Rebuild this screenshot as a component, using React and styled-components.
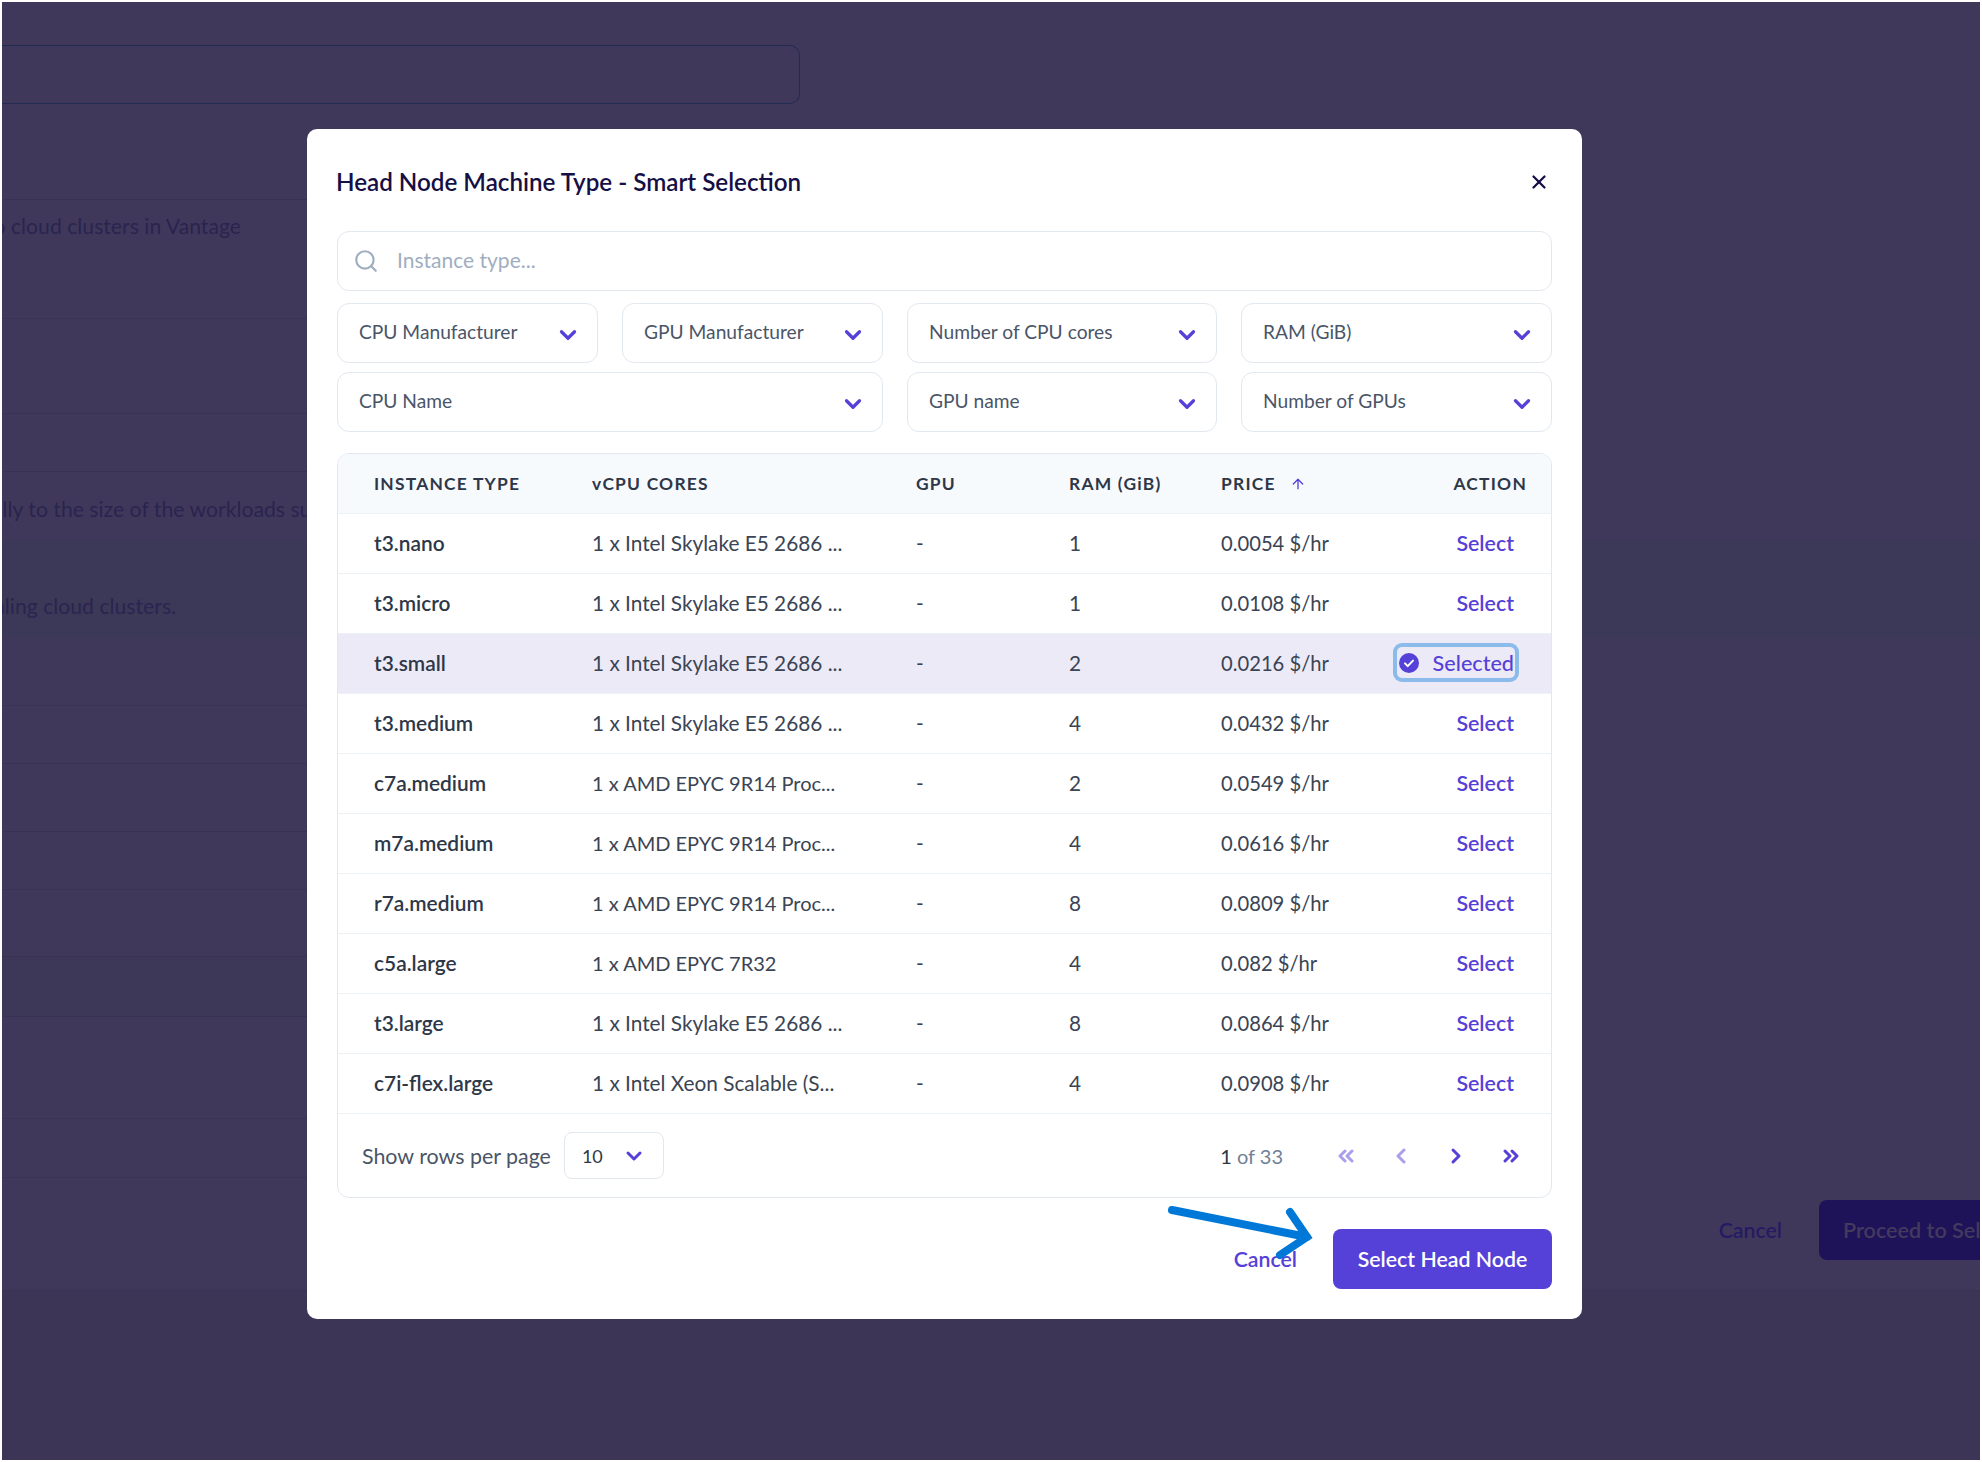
import React from "react";
import styled, { createGlobalStyle } from "styled-components";
import {
  ArrowUp,
  ChevronDown,
  ChevronLeft,
  ChevronRight,
  ChevronsLeft,
  ChevronsRight,
  Search,
  X,
} from "lucide-react";

const FONT = `Lato, "Open Sans", "Liberation Sans", sans-serif`;
const PURPLE = "#5541d7";
const LINE = "#393254";

const GlobalStyle = createGlobalStyle`
  html, body {
    margin: 0;
    padding: 0;
    background: #fff;
  }
  * {
    box-sizing: border-box;
  }
`;

const Page = styled.div`
  position: relative;
  width: 1982px;
  height: 1462px;
  padding: 2px;
  overflow: hidden;
  background: #fff;
  font-family: ${FONT};
`;

const Backdrop = styled.div`
  position: relative;
  height: 100%;
  overflow: hidden;
  background: #40385a;
  color: #2a2450;
`;

const TopField = styled.div`
  width: 798px;
  height: 59px;
  margin-top: 43px;
  margin-bottom: 95px;
  border: 1px solid #232b52;
  border-left: none;
  border-radius: 0 10px 10px 0;
`;

const Row = styled.div`
  height: ${(p) => p.$height}px;
  padding-top: ${(p) => p.$pad || 0}px;
  font-size: 21.2px;
  line-height: 22px;
  white-space: nowrap;
  text-indent: ${(p) => p.$indent || 0}px;
  background:
    ${(p) => (p.$noLine ? "" : `linear-gradient(${LINE}, ${LINE}) left top / 1000px 1px no-repeat,`)}
    ${(p) => (p.$leftBand ? "linear-gradient(#3d3857, #3d3857) left top / 1000px 100% no-repeat," : "")}
    ${(p) => (p.$band ? "#3c3857" : "transparent")};
`;

const BackdropFooter = styled.div`
  display: flex;
  align-items: center;
  justify-content: flex-end;
  gap: 37px;
  height: 113px;
  padding-bottom: 7px;
  background: linear-gradient(${LINE}, ${LINE}) left top / 1000px 1px no-repeat;
`;

const BackdropCancel = styled.span`
  color: #251b63;
  font-size: 21.3px;
  font-weight: 600;
`;

const BackdropButton = styled.div`
  flex: none;
  width: 300px;
  height: 60px;
  margin-right: -139px;
  padding-left: 24px;
  border-radius: 8px;
  background: #1e1259;
  color: #433a5e;
  font-size: 21.6px;
  font-weight: 600;
  line-height: 60px;
  white-space: nowrap;
`;

const BackdropEnd = styled.div`
  height: 200px;
  border-top: 1px solid ${LINE};
  background: #3c3555;
`;

const Modal = styled.div`
  position: absolute;
  left: 305px;
  top: 127px;
  width: 1275px;
  height: 1190px;
  padding: 0 30px 30px;
  border-radius: 10px;
  background: #fff;
  color: #2d3748;
  font-family: ${FONT};
`;

const ModalHeader = styled.div`
  display: flex;
  align-items: center;
  justify-content: space-between;
  height: 102px;
  padding-top: 2px;
`;

const Title = styled.h2`
  margin: 0 0 0 -1px;
  color: #160f45;
  font-size: 24.2px;
  font-weight: 600;
`;

const CloseButton = styled.button`
  display: flex;
  margin-right: 2px;
  padding: 2px 0 0;
  border: none;
  background: none;
  color: #160f45;
`;

const SearchBox = styled.div`
  display: flex;
  align-items: center;
  gap: 18px;
  height: 60px;
  padding: 0 15px;
  border: 1px solid #e2e8f0;
  border-radius: 12px;
  color: #a0aec0;
  font-size: 21px;
  line-height: 22px;
  span {
    margin-top: -2px;
  }
`;

const Filters = styled.div`
  display: grid;
  grid-template-columns: 261px 261px 310px 1fr;
  grid-auto-rows: 60px;
  column-gap: 24px;
  row-gap: 9px;
  margin-top: 12px;
`;

const Filter = styled.div`
  display: flex;
  align-items: center;
  justify-content: space-between;
  padding: 0 16px 0 21px;
  border: 1px solid #e2e8f0;
  border-radius: 12px;
  color: #4a5568;
  font-size: 19.2px;
  grid-column: ${(p) => (p.$wide ? "span 2" : "auto")};
  span {
    margin-top: -4px;
  }
  svg {
    color: ${PURPLE};
    margin-top: 3px;
  }
`;

const TableWrap = styled.div`
  height: 745px;
  margin-top: 21px;
  overflow: hidden;
  border: 1px solid #e2e8f0;
  border-radius: 12px;
`;

const TableRow = styled.div`
  display: grid;
  grid-template-columns: 218px 324px 153px 152px 172px 1fr;
  align-items: center;
  height: 60px;
  padding: ${(p) => (p.$head ? "0 24px 0 36px" : "0 25px 2px 36px")};
  border-bottom: 1px solid #edf2f7;
  background: ${(p) => (p.$head ? "#f7fafc" : p.$selected ? "#edeaf8" : "#fff")};
`;

const HeadCell = styled.div`
  display: flex;
  align-items: center;
  gap: 14px;
  justify-content: ${(p) => (p.$end ? "flex-end" : "flex-start")};
  color: #2d3748;
  font-size: 17.4px;
  font-weight: 700;
  letter-spacing: 0.07em;
  svg {
    color: ${PURPLE};
  }
`;

const NameCell = styled.div`
  font-size: 20.9px;
  font-weight: 600;
`;

const Cell = styled.div`
  color: #3a4454;
  font-size: ${(p) => p.$size || 20.8}px;
`;

const ActionCell = styled.div`
  display: flex;
  justify-content: flex-end;
  padding-right: 12px;
  color: ${PURPLE};
  font-size: 21.4px;
  font-weight: 600;
`;

const SelectedButton = styled.div`
  display: flex;
  flex: none;
  align-items: center;
  gap: 14px;
  height: 31px;
  margin-right: -1px;
  padding: 0 1px 0 2px;
  border-radius: 5px;
  box-shadow: 0 0 0 4px #8abbeb;
  font-size: 21.6px;
  font-weight: 500;
  white-space: nowrap;
`;

const TableFooter = styled.div`
  display: flex;
  align-items: center;
  justify-content: space-between;
  height: 83px;
  padding: 0 13px 0 24px;
`;

const RowsPerPage = styled.div`
  display: flex;
  align-items: center;
  gap: 13px;
  color: #4a5568;
  font-size: 21.4px;
`;

const PageSize = styled.div`
  display: flex;
  align-items: center;
  justify-content: space-between;
  width: 100px;
  height: 47px;
  padding: 0 17px 0 17px;
  border: 1px solid #e2e8f0;
  border-radius: 8px;
  color: #2d3748;
  font-size: 18px;
  svg {
    color: ${PURPLE};
  }
`;

const Pager = styled.div`
  display: flex;
  align-items: center;
`;

const PageCount = styled.span`
  margin-right: 35px;
  color: #718096;
  font-size: 20px;
  b {
    color: #2d3748;
    font-weight: 400;
  }
`;

const PageButton = styled.span`
  display: flex;
  justify-content: center;
  width: 55px;
  color: ${PURPLE};
  opacity: ${(p) => (p.$disabled ? 0.5 : 1)};
`;

const Actions = styled.div`
  display: flex;
  align-items: center;
  justify-content: flex-end;
  gap: 36px;
  margin-top: 31px;
`;

const CancelLink = styled.span`
  color: ${PURPLE};
  font-size: 21.3px;
  font-weight: 600;
`;

const PrimaryButton = styled.button`
  width: 219px;
  height: 60px;
  border: none;
  border-radius: 8px;
  background: ${PURPLE};
  color: #fff;
  font-family: inherit;
  font-size: 21.3px;
  font-weight: 600;
`;

const ArrowMark = styled.svg`
  position: absolute;
  left: 1160px;
  top: 1198px;
  pointer-events: none;
`;

const backdropRows = [
  { height: 119, pad: 16, text: "to cloud clusters in Vantage", indent: -16 },
  { height: 95 },
  { height: 58 },
  { height: 69, pad: 27, text: "ally to the size of the workloads supplied to them", indent: -10 },
  { height: 98, pad: 55, band: true, noLine: true, text: "scaling cloud clusters.", indent: -27 },
  { height: 67, noLine: true },
  { height: 58 },
  { height: 68 },
  { height: 58 },
  { height: 67 },
  { height: 60, leftBand: true },
  { height: 102 },
  { height: 59 },
];

const instances = [
  ["t3.nano", "1 x Intel Skylake E5 2686 ...", "1", "0.0054 $/hr"],
  ["t3.micro", "1 x Intel Skylake E5 2686 ...", "1", "0.0108 $/hr"],
  ["t3.small", "1 x Intel Skylake E5 2686 ...", "2", "0.0216 $/hr", true],
  ["t3.medium", "1 x Intel Skylake E5 2686 ...", "4", "0.0432 $/hr"],
  ["c7a.medium", "1 x AMD EPYC 9R14 Proc...", "2", "0.0549 $/hr"],
  ["m7a.medium", "1 x AMD EPYC 9R14 Proc...", "4", "0.0616 $/hr"],
  ["r7a.medium", "1 x AMD EPYC 9R14 Proc...", "8", "0.0809 $/hr"],
  ["c5a.large", "1 x AMD EPYC 7R32", "4", "0.082 $/hr"],
  ["t3.large", "1 x Intel Skylake E5 2686 ...", "8", "0.0864 $/hr"],
  ["c7i-flex.large", "1 x Intel Xeon Scalable (S...", "4", "0.0908 $/hr"],
];

const filters = [
  { label: "CPU Manufacturer" },
  { label: "GPU Manufacturer" },
  { label: "Number of CPU cores" },
  { label: "RAM (GiB)" },
  { label: "CPU Name", wide: true },
  { label: "GPU name" },
  { label: "Number of GPUs" },
];

function CheckBadge() {
  return (
    <svg width="20" height="20" viewBox="0 0 20 20">
      <circle cx="10" cy="10" r="10" fill={PURPLE} />
      <path d="M6 10.4l2.7 2.7L14 7.6" fill="none" stroke="#fff" strokeWidth="2" strokeLinecap="round" strokeLinejoin="round" />
    </svg>
  );
}

export default function App() {
  return (
    <Page>
      <GlobalStyle />
      <Backdrop>
        <TopField />
        {backdropRows.map((row, i) => (
          <Row key={i} $height={row.height} $pad={row.pad} $indent={row.indent} $band={row.band} $noLine={row.noLine} $leftBand={row.leftBand}>
            {row.text}
          </Row>
        ))}
        <BackdropFooter>
          <BackdropCancel>Cancel</BackdropCancel>
          <BackdropButton>Proceed to Select Instance</BackdropButton>
        </BackdropFooter>
        <BackdropEnd />
        <Modal>
          <ModalHeader>
            <Title>Head Node Machine Type - Smart Selection</Title>
            <CloseButton>
              <X size={22} strokeWidth={2.5} />
            </CloseButton>
          </ModalHeader>
          <SearchBox>
            <Search size={26} strokeWidth={2} />
            <span>Instance type...</span>
          </SearchBox>
          <Filters>
            {filters.map((f) => (
              <Filter key={f.label} $wide={f.wide}>
                <span>{f.label}</span>
                <ChevronDown size={26} strokeWidth={3} />
              </Filter>
            ))}
          </Filters>
          <TableWrap>
            <TableRow $head>
              <HeadCell>INSTANCE TYPE</HeadCell>
              <HeadCell>vCPU CORES</HeadCell>
              <HeadCell>GPU</HeadCell>
              <HeadCell>RAM (GiB)</HeadCell>
              <HeadCell>
                PRICE
                <ArrowUp size={16} strokeWidth={2} />
              </HeadCell>
              <HeadCell $end>ACTION</HeadCell>
            </TableRow>
            {instances.map(([name, cpu, ram, price, selected]) => (
              <TableRow key={name} $selected={selected}>
                <NameCell>{name}</NameCell>
                <Cell $size={cpu.includes("AMD") ? 20 : 20.8}>{cpu}</Cell>
                <Cell>-</Cell>
                <Cell>{ram}</Cell>
                <Cell $size={20.2}>{price}</Cell>
                <ActionCell>
                  {selected ? (
                    <SelectedButton>
                      <CheckBadge />
                      Selected
                    </SelectedButton>
                  ) : (
                    "Select"
                  )}
                </ActionCell>
              </TableRow>
            ))}
            <TableFooter>
              <RowsPerPage>
                Show rows per page
                <PageSize>
                  10
                  <ChevronDown size={24} strokeWidth={3} />
                </PageSize>
              </RowsPerPage>
              <Pager>
                <PageCount>
                  <b>1</b> of 33
                </PageCount>
                <PageButton $disabled>
                  <ChevronsLeft size={24} strokeWidth={3} />
                </PageButton>
                <PageButton $disabled>
                  <ChevronLeft size={24} strokeWidth={3} />
                </PageButton>
                <PageButton>
                  <ChevronRight size={24} strokeWidth={3} />
                </PageButton>
                <PageButton>
                  <ChevronsRight size={24} strokeWidth={3} />
                </PageButton>
              </Pager>
            </TableFooter>
          </TableWrap>
          <Actions>
            <CancelLink>Cancel</CancelLink>
            <PrimaryButton>Select Head Node</PrimaryButton>
          </Actions>
        </Modal>
        <ArrowMark width="160" height="70" viewBox="0 0 160 70">
          <path
            d="M10 10L145 37M128 12L145 37L118 55"
            fill="none"
            stroke="#0078d7"
            strokeWidth="8"
            strokeLinecap="round"
          />
        </ArrowMark>
      </Backdrop>
    </Page>
  );
}
